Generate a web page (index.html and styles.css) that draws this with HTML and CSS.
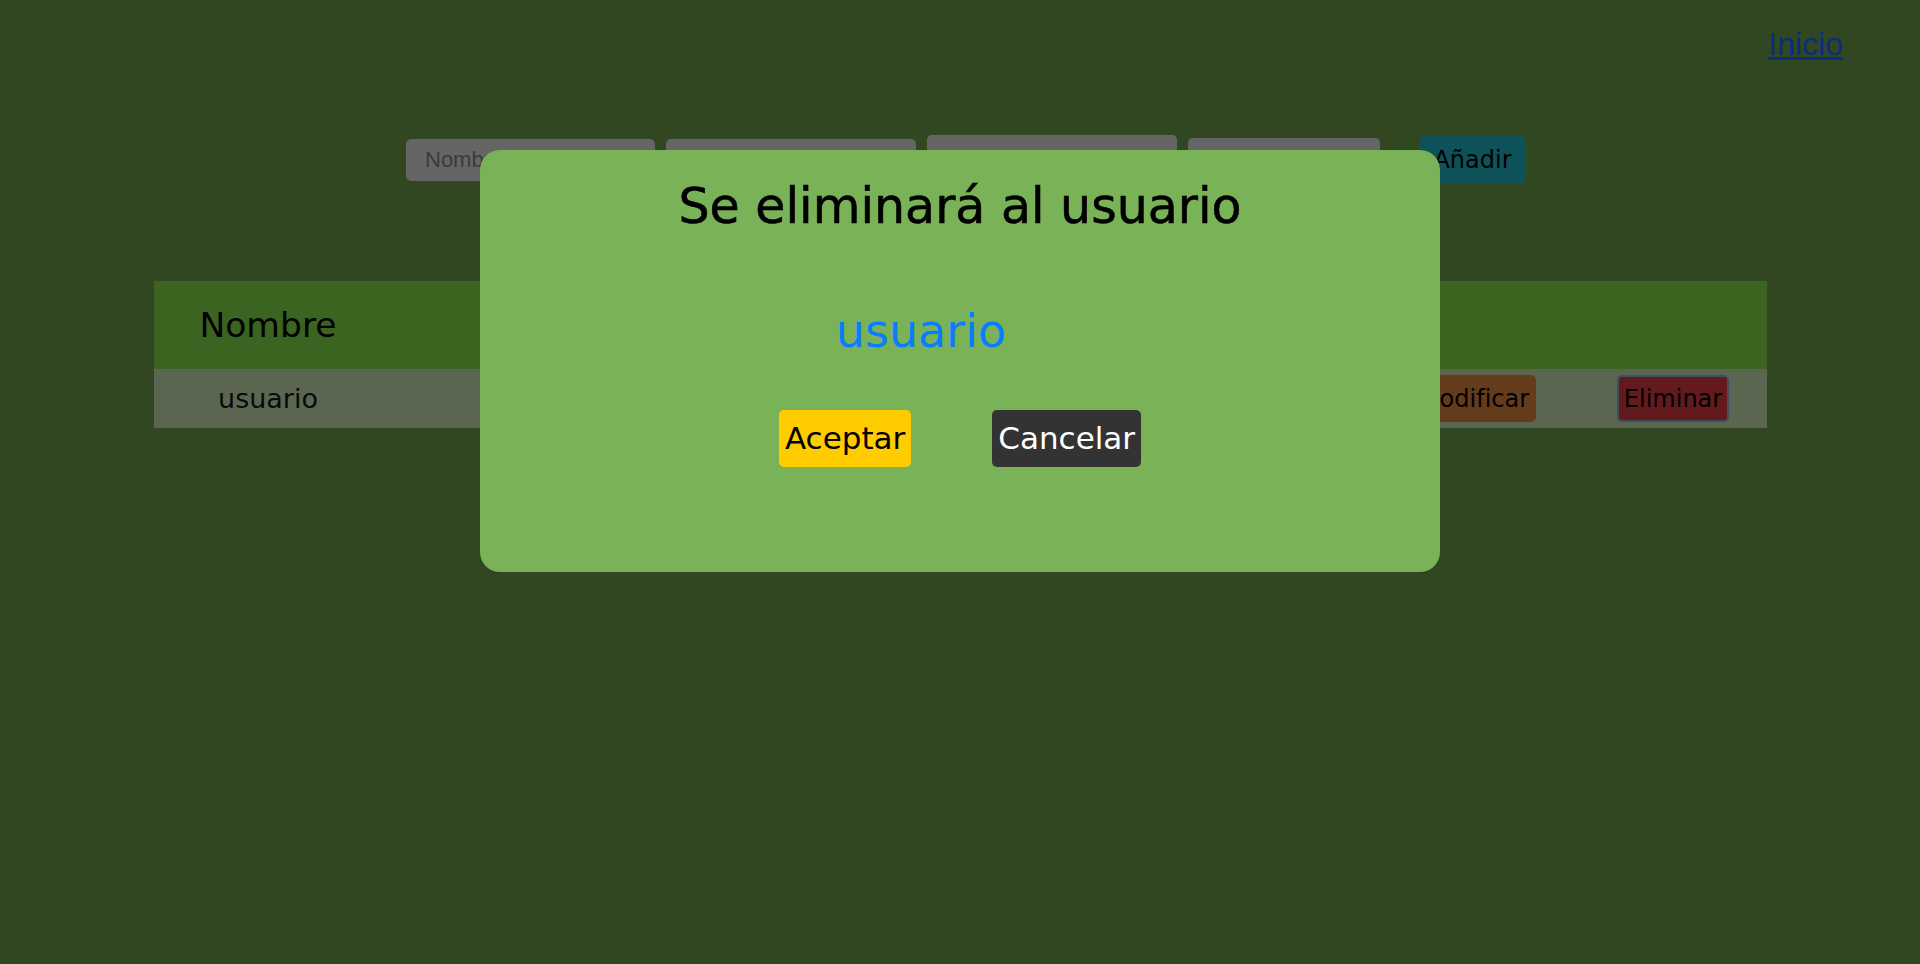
FILE: index.html
```html
<!DOCTYPE html>
<html lang="es">
<head>
<meta charset="utf-8">
<title>Usuarios</title>
<link rel="stylesheet" href="styles.css">
</head>
<body>
<nav class="top-nav">
  <a class="home-link" href="#">Inicio</a>
</nav>

<form class="add-form">
  <input class="field field-name" type="text" placeholder="Nombre">
  <input class="field field-mail" type="text">
  <input class="field field-pass" type="text">
  <input class="field field-role" type="text">
  <button class="btn-add" type="button">Añadir</button>
</form>

<table class="users">
  <colgroup>
    <col class="c-name">
    <col class="c-mid">
    <col class="c-mid">
    <col class="c-mid">
    <col class="c-mod">
    <col class="c-del">
  </colgroup>
  <thead>
    <tr>
      <th>Nombre</th>
      <th></th>
      <th></th>
      <th></th>
      <th></th>
      <th></th>
    </tr>
  </thead>
  <tbody>
    <tr>
      <td>usuario</td>
      <td></td>
      <td></td>
      <td></td>
      <td><button class="btn-mod" type="button">Modificar</button></td>
      <td><button class="btn-del" type="button">Eliminar</button></td>
    </tr>
  </tbody>
</table>

<div class="modal">
  <h2 class="modal-title">Se eliminará al usuario</h2>
  <p class="modal-user">usuario</p>
  <div class="modal-actions">
    <button class="btn-ok" type="button">Aceptar</button>
    <button class="btn-cancel" type="button">Cancelar</button>
  </div>
</div>
</body>
</html>
```

FILE: styles.css
```css
html, body {
  margin: 0;
  padding: 0;
}

body {
  background: #304721;
  font-family: "DejaVu Sans", "Noto Sans", sans-serif;
  color: #000;
  height: 964px;
  overflow: hidden;
}

.top-nav {
  display: flex;
  justify-content: flex-end;
  padding: 26px 77px 0 0;
}

.home-link {
  font-family: "Liberation Sans", Arial, sans-serif;
  font-size: 32px;
  line-height: 37px;
  color: #0b2c80;
  text-decoration: underline;
}

.add-form {
  display: flex;
  justify-content: center;
  align-items: center;
  gap: 11px;
  height: 50px;
  margin: 72px 0 0 0;
  padding-left: 12px;
}

.field {
  box-sizing: border-box;
  border: none;
  border-radius: 5px;
  background: #656565;
  font-family: "Liberation Sans", Arial, sans-serif;
  font-size: 22px;
  padding: 0 19px;
  color: #3a3a44;
  outline: none;
}

.field::placeholder {
  color: #3a3a44;
  opacity: 1;
}

.field-name { width: 249px; height: 42px; }
.field-mail { width: 250px; height: 42px; }
.field-pass { width: 250px; height: 50px; }
.field-role { width: 192px; height: 44px; }

.btn-add {
  margin-left: 28px;
  width: 107px;
  height: 48px;
  border: none;
  border-radius: 6px;
  background: #0e5259;
  color: #000;
  font-family: "DejaVu Sans", sans-serif;
  font-size: 24px;
  line-height: 36px;
  padding: 0;
}

.users {
  table-layout: fixed;
  border-collapse: collapse;
  width: 1612px;
  margin: 96px 0 0 154px;
}

.c-name { width: 228px; }
.c-mid { width: 329px; }
.c-mod { width: 210px; }
.c-del { width: 188px; }

.users th {
  height: 88px;
  padding: 0;
  background: #3c6421;
  font-size: 34.5px;
  font-weight: 400;
  text-align: center;
  vertical-align: middle;
  color: #000;
}

.users td {
  height: 59px;
  padding: 0;
  background: #5a6650;
  font-size: 27px;
  text-align: center;
  vertical-align: middle;
  color: #0a0a0a;
}

.btn-mod,
.btn-del {
  font-family: "DejaVu Sans", sans-serif;
  font-size: 24px;
  line-height: 36px;
  padding: 3.5px 5px;
  border-radius: 5px;
  color: #000;
}

.btn-mod {
  background: #643c1c;
  border: 2px solid #643c1c;
}

.btn-del {
  background: #641a1c;
  border: 2px solid #3e5060;
}

.modal {
  position: fixed;
  top: 150px;
  left: 25%;
  width: 50%;
  height: 422px;
  box-sizing: border-box;
  padding-top: 27px;
  background: #7ab257;
  border-radius: 20px;
  display: flex;
  flex-direction: column;
  align-items: center;
}

.modal-title {
  margin: 0;
  font-size: 49px;
  line-height: 59px;
  font-weight: 400;
  color: #000;
  -webkit-text-stroke: 0.6px #000;
}

.modal-user {
  margin: 68px 0 0 0;
  padding-right: 78px;
  font-size: 46px;
  line-height: 55px;
  color: #0a7cff;
}

.modal-actions {
  display: flex;
  gap: 81px;
  margin-top: 51px;
}

.btn-ok,
.btn-cancel {
  border: none;
  border-radius: 5px;
  padding: 6px 6px;
  font-family: "DejaVu Sans", sans-serif;
  font-size: 31px;
  line-height: 45px;
}

.btn-ok {
  background: #ffcc00;
  color: #000;
}

.btn-cancel {
  background: #333333;
  color: #fff;
}
```
